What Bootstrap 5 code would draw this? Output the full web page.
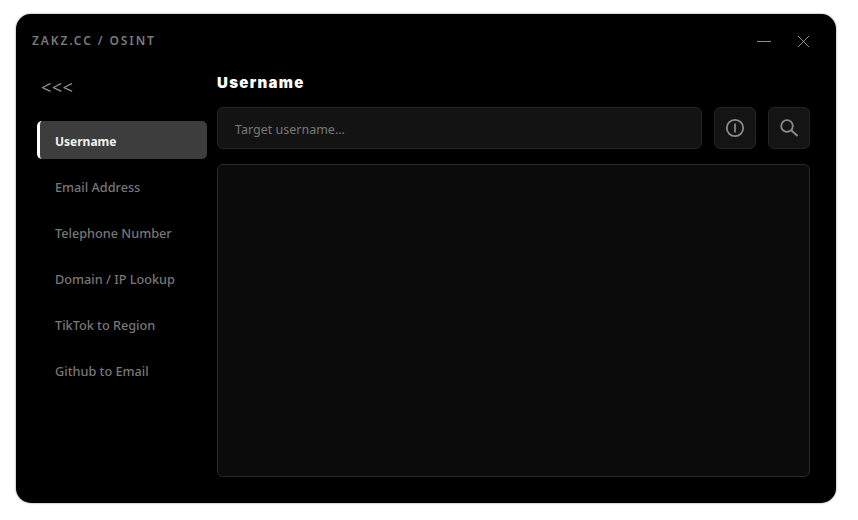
<!DOCTYPE html>
<html lang="en">
<head>
<meta charset="utf-8">
<title>OSINT</title>
<link href="https://cdn.jsdelivr.net/npm/bootstrap@5.3.0/dist/css/bootstrap.min.css" rel="stylesheet">
<style>
html,body{height:100%;background:#fff;overflow:hidden}
body{padding:14px 22px 17px 16px;font-family:"Noto Sans","Open Sans",sans-serif}
.app-win{width:820px;height:489px;background:#000;border-radius:15px;box-shadow:0 0 2px rgba(0,0,0,.55);padding:0 26px 26px 21px}
.title-bar{height:53px}
.app-name{font-size:12px;font-weight:600;letter-spacing:1.9px;color:#7a7a7a;margin-left:-5px;padding-top:1px}
.win-ctrls{gap:26px;padding-top:1px}
.side-col{width:170px;flex:none}
.back-link{font-size:18px;color:#8f8f8f;line-height:20px;height:20px;margin:10px 0 24px 4px;letter-spacing:.4px}
.side-item{height:38px;margin-bottom:8px;padding:4px 0 0 18px;font-size:12.7px;font-weight:500;color:#777;border-radius:5px;display:flex;align-items:center}
.side-on{background:#3d3d3d;color:#f2f2f2;font-weight:700;font-size:12px;border-left:3px solid #fff;padding-left:15px}
.main-col{margin-left:10px;min-width:0}
.page-head{font-family:Inter,sans-serif;font-weight:900;font-size:15px;letter-spacing:1.3px;color:#fff;line-height:20px;margin:6px 0 14px}
.search-row{gap:12px;height:42px;margin-bottom:15px}
.target-input.form-control{height:42px;background:#131313;border:1px solid #242424;border-radius:6px;color:#ccc;font-size:12.5px;padding:2px 17px 0;box-shadow:none}
.target-input::placeholder{color:#777;opacity:1}
.tool-btn.btn{width:42px;height:42px;padding:0;background:#141414;border:1px solid #242424;border-radius:6px;display:flex;align-items:center;justify-content:center;flex:none}
.out-box{height:313px;background:#0b0b0b;border:1px solid #2a2a2a;border-radius:6px}
</style>
</head>
<body>
<div class="app-win d-flex flex-column">
  <div class="title-bar d-flex align-items-center justify-content-between">
    <div class="app-name">ZAKZ.CC / OSINT</div>
    <div class="win-ctrls d-flex align-items-center">
      <svg width="14" height="14" viewBox="0 0 14 14" fill="none"><path d="M0 7.5H14" stroke="#8a8a8a"/></svg>
      <svg width="13" height="13" viewBox="0 0 13 13" fill="none"><path d="M1 1L12 12M12 1L1 12" stroke="#a0a0a0" stroke-width=".9"/></svg>
    </div>
  </div>
  <div class="d-flex flex-grow-1">
    <div class="side-col">
      <div class="back-link">&lt;&lt;&lt;</div>
      <div class="side-item side-on">Username</div>
      <div class="side-item">Email Address</div>
      <div class="side-item">Telephone Number</div>
      <div class="side-item">Domain / IP Lookup</div>
      <div class="side-item">TikTok to Region</div>
      <div class="side-item">Github to Email</div>
    </div>
    <div class="main-col flex-grow-1">
      <div class="page-head">Username</div>
      <div class="search-row d-flex">
        <input class="form-control target-input flex-grow-1" placeholder="Target username...">
        <button class="btn tool-btn" type="button" aria-label="Info">
          <svg width="20" height="20" viewBox="0 0 20 20" fill="none"><circle cx="10" cy="10" r="8.2" stroke="#8c8c8c" stroke-width="1.8"/><path d="M10 5.5V14.5" stroke="#8c8c8c" stroke-width="1.7"/></svg>
        </button>
        <button class="btn tool-btn" type="button" aria-label="Search">
          <svg width="20" height="20" viewBox="0 0 20 20" fill="none"><circle cx="8" cy="8" r="5.8" stroke="#8c8c8c" stroke-width="1.8"/><path d="M12.2 12.2L18.6 18" stroke="#8c8c8c" stroke-width="2"/></svg>
        </button>
      </div>
      <div class="out-box"></div>
    </div>
  </div>
</div>
</body>
</html>
